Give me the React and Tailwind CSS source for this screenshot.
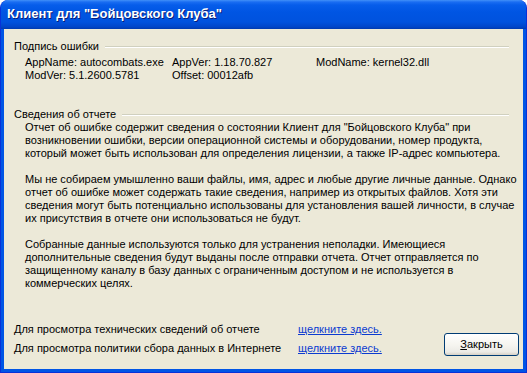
const para1 = [
  "Отчет об ошибке содержит сведения о состоянии Клиент для \"Бойцовского Клуба\" при",
  "возникновении ошибки, версии операционной системы и оборудовании, номер продукта,",
  "который может быть использован для определения лицензии, а также IP-адрес компьютера.",
];

const para2 = [
  "Мы не собираем умышленно ваши файлы, имя, адрес и любые другие личные данные. Однако",
  "отчет об ошибке может содержать такие сведения, например из открытых файлов. Хотя эти",
  "сведения могут быть потенциально использованы для установления вашей личности, в случае",
  "их присутствия в отчете они использоваться не будут.",
];

const para3 = [
  "Собранные данные используются только для устранения неполадки. Имеющиеся",
  "дополнительные сведения будут выданы после отправки отчета. Отчет отправляется по",
  "защищенному каналу в базу данных с ограниченным доступом и не используется в",
  "коммерческих целях.",
];

const SectionLabel = ({ children, className = "" }) => (
  <div className={`flex items-center h-[13px] pl-[10px] pr-[14px] ${className}`}>
    <span className="whitespace-nowrap">{children}</span>
    <div className="flex-1 ml-[6px] h-[2px] border-t border-[#D0D0BF] border-b border-b-white" />
  </div>
);

const Para = ({ lines, className = "" }) => (
  <div className={`pl-[21px] ${className}`}>
    {lines.map((line, i) => (
      <div key={i} className="whitespace-nowrap h-[13px]">
        {line}
      </div>
    ))}
  </div>
);

export default function App() {
  return (
    <div className="w-[527px] h-[373px] bg-white font-['Liberation_Sans',Arial,sans-serif]">
      <div className="flex h-full flex-col overflow-hidden rounded-t-[8px] bg-[#0055E5] border-x border-b border-[#0831D9]">
        <div className="h-[29px] shrink-0 flex items-center pl-[6px] pb-[1px] bg-[linear-gradient(to_bottom,#4190F8_0px,#1A6DF2_2px,#065DEA_5px,#0055E3_12px,#0052DE_22px,#0045C8_27px,#003AAE_29px)] text-white font-bold text-[13px] [text-shadow:1px_1px_0_#0A1E78]">
          Клиент для "Бойцовского Клуба"
        </div>
        <div className="flex-1 flex px-[3px] pb-[3px]">
          <div className="flex-1 flex flex-col bg-[#ECE9D8] text-[11px] leading-[13px] text-black">
            <SectionLabel className="mt-[11px]">Подпись ошибки</SectionLabel>
            <div className="mt-[3px] pl-[21px] grid grid-cols-[147px_144px_auto]">
              <div className="whitespace-nowrap">AppName: autocombats.exe</div>
              <div className="whitespace-nowrap">AppVer: 1.18.70.827</div>
              <div className="whitespace-nowrap">ModName: kernel32.dll</div>
              <div className="whitespace-nowrap">ModVer: 5.1.2600.5781</div>
              <div className="whitespace-nowrap">Offset: 00012afb</div>
              <div />
            </div>
            <SectionLabel className="mt-[26px]">Сведения об отчете</SectionLabel>
            <Para lines={para1} />
            <Para lines={para2} className="mt-[13px]" />
            <Para lines={para3} className="mt-[13px]" />

            <div className="mt-auto flex pb-[11px]">
              <div className="pl-[10px] flex flex-col">
                <div className="h-[19px] grid grid-cols-[284px_auto] items-center">
                  <span className="whitespace-nowrap">Для просмотра технических сведений об отчете</span>
                  <a href="#" className="whitespace-nowrap text-[#0B3BD0] underline">щелкните здесь.</a>
                </div>
                <div className="h-[19px] grid grid-cols-[284px_auto] items-center">
                  <span className="whitespace-nowrap">Для просмотра политики сбора данных в Интернете</span>
                  <a href="#" className="whitespace-nowrap text-[#0B3BD0] underline">щелкните здесь.</a>
                </div>
              </div>
              <button className="ml-auto mr-[4px] mb-[2px] self-end w-[75px] h-[23px] rounded-[3px] border border-[#003C74] bg-[linear-gradient(to_bottom,#FFFFFF_0%,#F6F5F0_50%,#ECEBE6_85%,#D6D0C5_100%)] text-[11px] text-black flex items-center justify-center">
                <span>
                  <span className="underline">З</span>акрыть
                </span>
              </button>
            </div>
          </div>
        </div>
      </div>
    </div>
  );
}
